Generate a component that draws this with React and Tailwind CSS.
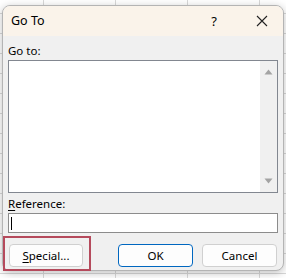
export default function App() {
  return (
    <div
      className="relative w-[286px] h-[278px] overflow-hidden bg-white bg-[linear-gradient(to_right,#d9d9d9_1px,transparent_1px),linear-gradient(to_bottom,#d9d9d9_1px,transparent_1px)] bg-[size:72px_20px] bg-[position:43px_13px]"
      style={{ fontFamily: '"Noto Sans", "Segoe UI", sans-serif' }}
    >
      <div className="absolute left-[2px] top-[5px] w-[282px] h-[266px] rounded-[8px] border border-[#b4b4b4] bg-[#f0f0f0] shadow-[0_2px_8px_rgba(0,0,0,0.25)] overflow-hidden flex flex-col text-[11.5px] text-black">
        {/* Title bar */}
        <div className="h-[30px] shrink-0 bg-[#faf3ea] flex items-center pl-[8px]">
          <span className="flex-1 text-[12.5px] leading-none">Go To</span>
          <span className="w-[10px] text-center text-[13px] leading-none mr-[37px]">?</span>
          <svg width="12" height="12" viewBox="0 0 12 12" className="mr-[15px]">
            <path d="M1 1 L11 11 M11 1 L1 11" stroke="#222" strokeWidth="1.1" />
          </svg>
        </div>
        {/* Body */}
        <div className="flex flex-col px-[5px] pt-[7px]">
          <div className="leading-[16px] h-[16px]">Go to:</div>
          <div className="mt-[1px] h-[133px] border border-[#828790] bg-white flex">
            <div className="flex-1" />
            <div className="w-[17px] bg-[#f0f0f0] flex flex-col items-center justify-between py-[8px]">
              <svg width="9" height="6" viewBox="0 0 9 6">
                <path d="M0.5 5.5 L4.5 0.5 L8.5 5.5 Z" fill="#a3a3a3" />
              </svg>
              <svg width="9" height="6" viewBox="0 0 9 6">
                <path d="M0.5 0.5 L4.5 5.5 L8.5 0.5 Z" fill="#a3a3a3" />
              </svg>
            </div>
          </div>
          <div className="mt-[3px] leading-[16px] h-[16px]">
            <span className="underline underline-offset-2">R</span>eference:
          </div>
          <div className="mt-[1px] h-[20px] border border-[#8c8c8c] bg-white flex items-center pl-[2px]">
            <div className="w-[1px] h-[13px] bg-black" />
          </div>
          <div className="mt-[11px] flex items-center">
            <button className="ml-[1px] w-[74px] h-[23px] rounded-[4px] border border-[#d0d0d0] bg-[#fdfdfd] leading-none">
              <span className="underline underline-offset-2">S</span>pecial...
            </button>
            <button className="ml-[35px] w-[75px] h-[23px] rounded-[4px] border border-[#0067c0] bg-[#fdfdfd] leading-none">
              OK
            </button>
            <button className="ml-[9px] w-[75px] h-[23px] rounded-[4px] border border-[#d0d0d0] bg-[#fdfdfd] leading-none">
              Cancel
            </button>
          </div>
        </div>
      </div>
      {/* Red highlight */}
      <div className="absolute left-[3px] top-[236px] w-[88px] h-[35px] border-2 border-[#b54a5c]" />
    </div>
  );
}
